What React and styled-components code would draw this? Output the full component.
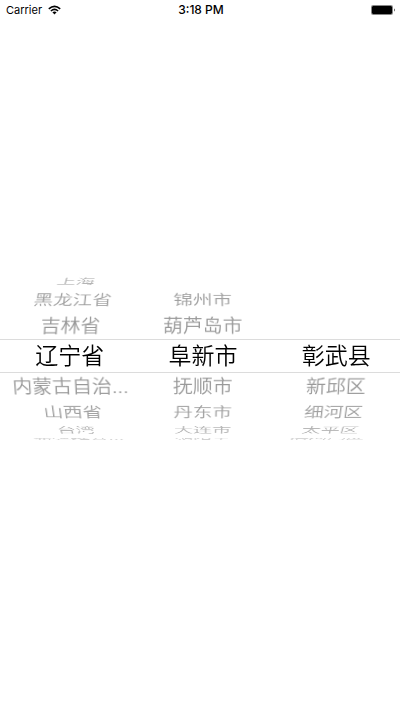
import React from "react";
import styled, { createGlobalStyle } from "styled-components";

const GlobalStyle = createGlobalStyle`
  body {
    margin: 0;
    background: #fff;
    color: #000;
    font-family: Inter, "Noto Sans CJK SC", sans-serif;
  }
`;

const Screen = styled.main`
  min-height: 100vh;
  display: grid;
  grid-template-rows: 20px 1fr 20px;
`;

const StatusBar = styled.header`
  display: grid;
  grid-template-columns: 1fr auto 1fr;
  align-items: center;
  padding: 0 4px 0 6px;
  font-size: 11px;
  line-height: 20px;
`;

const Carrier = styled.span`
  display: flex;
  align-items: center;
  gap: 6px;
`;

const Clock = styled.time`
  font-size: 12px;
  font-weight: 500;
`;

const BatteryIcon = styled.svg`
  justify-self: end;
`;

const Picker = styled.section`
  align-self: center;
  display: grid;
  grid-template-columns: repeat(3, 1fr);
`;

const Wheel = styled.ul`
  min-width: 0;
  margin: 0;
  padding: 0;
  list-style: none;
  perspective: 1000px;
  perspective-origin: ${(p) => p.$origin} 50%;
`;

const faces = {
  0: { height: 34, depth: 0, angle: 0, size: 23, color: "#000" },
  1: { height: 27, depth: 6, angle: 22, size: 20, color: "#999" },
  2: { height: 27, depth: 24, angle: 42, size: 20, color: "#a0a0a0" },
  3: { height: 14, depth: 50, angle: 61, size: 20, color: "#b4b4b4" },
  4: { height: 8, depth: 74, angle: 79, size: 20, color: "#ccc" },
};

const face = (p) => faces[Math.abs(p.$step)];

const Option = styled.li`
  box-sizing: border-box;
  display: flex;
  align-items: center;
  justify-content: center;
  height: ${(p) => face(p).height}px;
  padding-left: 6px;
  border: solid #dcdcdc;
  border-width: ${(p) => (p.$step === 0 ? "1px 0" : "0")};
  color: ${(p) => face(p).color};
  font-size: ${(p) => face(p).size}px;
  font-weight: 350;
  line-height: 24px;
  white-space: nowrap;
  transform: ${(p) =>
    p.$step === 0
      ? "none"
      : `translateZ(-${face(p).depth}px) rotateX(${-Math.sign(p.$step) * face(p).angle}deg)`};
`;

const wheels = [
  {
    label: "省",
    origin: "150%",
    options: ["", "上海", "黑龙江省", "吉林省", "辽宁省", "内蒙古自治...", "山西省", "台湾", "新疆维吾..."],
  },
  {
    label: "市",
    origin: "50%",
    options: ["", "", "锦州市", "葫芦岛市", "阜新市", "抚顺市", "丹东市", "大连市", "朝阳市"],
  },
  {
    label: "区县",
    origin: "-50%",
    options: ["", "", "", "", "彰武县", "新邱区", "细河区", "太平区", "清河门区"],
  },
];

export default function App() {
  return (
    <>
      <GlobalStyle />
      <Screen lang="zh-CN">
        <StatusBar>
          <Carrier>
            Carrier
            <svg width="13" height="10" viewBox="0 0 13 10" aria-hidden="true">
              <g fill="none" stroke="#000" strokeWidth="1.6">
                <path d="M0.8 3.8Q6.5 -1.2 12.2 3.8" />
                <path d="M2.9 6Q6.5 2.8 10.1 6" />
              </g>
              <path d="M4.4 7.2Q6.5 5.6 8.6 7.2L6.5 9.4Z" />
            </svg>
          </Carrier>
          <Clock>3:18 PM</Clock>
          <BatteryIcon width="25" height="10" viewBox="0 0 25 10" aria-hidden="true">
            <rect x="0.5" y="0.5" width="21" height="9" rx="1" fill="#fff" stroke="#888" />
            <rect x="1" y="1" width="20" height="8" rx="1" />
            <path d="M23 3.3Q24.5 5 23 6.7Z" />
          </BatteryIcon>
        </StatusBar>
        <Picker>
          {wheels.map((wheel) => (
            <Wheel key={wheel.label} role="listbox" aria-label={wheel.label} $origin={wheel.origin}>
              {wheel.options.map((name, i) =>
                name ? (
                  <Option key={i} role="option" aria-selected={i === 4} $step={i - 4}>
                    {name}
                  </Option>
                ) : (
                  <Option key={i} aria-hidden="true" $step={i - 4} />
                )
              )}
            </Wheel>
          ))}
        </Picker>
      </Screen>
    </>
  );
}
